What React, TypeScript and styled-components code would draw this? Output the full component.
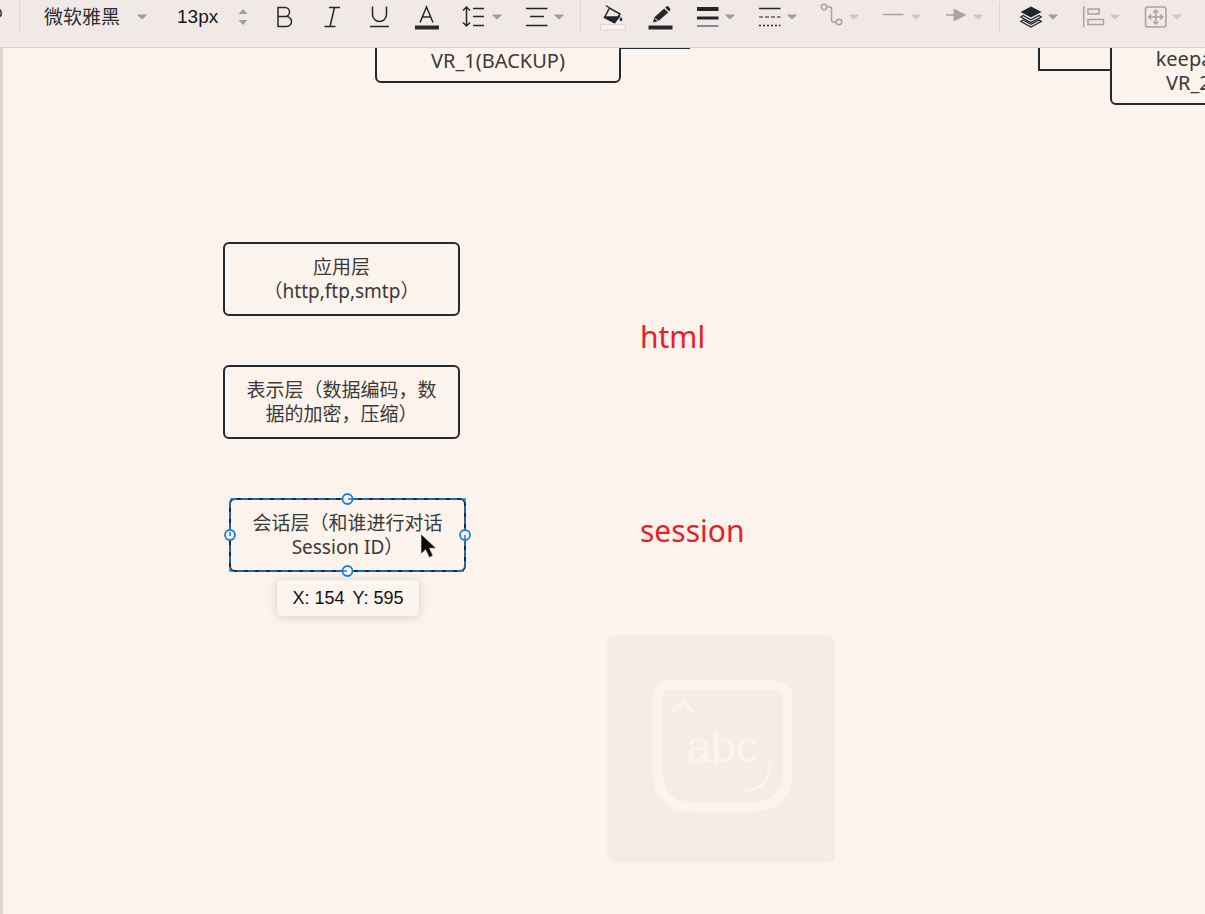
import React from 'react';
import styled, { createGlobalStyle } from 'styled-components';

const ink = '#22272e';
const faded = '#a8a3a1';
const line = '#242a31';
const blue = '#1b7fdc';

const GlobalStyle = createGlobalStyle`
  * { box-sizing: border-box; }
  body { margin: 0; background: #fbf3ec; }
  button, input, select { font: inherit; color: inherit; background: none; border: 0; margin: 0; padding: 0; }
`;

const Page = styled.div`
  display: flex;
  flex-direction: column;
  min-height: 100vh;
  overflow: hidden;
  font-family: "Noto Sans", "Noto Sans CJK SC", sans-serif;
  color: #3a3a3a;
`;

const Toolbar = styled.header`
  position: relative;
  z-index: 1;
  display: flex;
  align-items: flex-start;
  gap: 24px;
  height: 48px;
  padding-top: 2px;
  background: #f1e9e6;
  border-bottom: 1px solid #dad2d0;
  overflow: hidden;
`;

const Divider = styled.span<{ $first?: boolean }>`
  flex: none;
  width: 1px;
  height: 30px;
  margin: ${p => (p.$first ? '0 0 0 -8px' : '0 -4px 0 -8px')};
  background: #dbd4d2;
`;

const ToolButton = styled.button<{ $width?: number }>`
  flex: none;
  display: flex;
  align-items: center;
  justify-content: space-between;
  width: ${p => p.$width ?? 24}px;
  height: 30px;
`;

const FontPicker = styled.label`
  flex: none;
  display: flex;
  align-items: center;
  justify-content: space-between;
  width: 103px;
  height: 30px;
`;

const FontSelect = styled.select`
  appearance: none;
  width: 84px;
  height: 30px;
  font-size: 19px;
  line-height: 30px;
  color: #2b2f35;
  outline: 0;
`;

const SizeField = styled.div`
  flex: none;
  display: flex;
  align-items: center;
  justify-content: space-between;
  width: 77px;
  height: 30px;
  padding-left: 6px;
`;

const SizeInput = styled.input`
  width: 48px;
  height: 30px;
  font-family: "Liberation Sans", sans-serif;
  font-size: 19px;
  color: #16181b;
`;

const Stepper = styled.div`
  display: flex;
  flex-direction: column;
  gap: 6px;
`;

const StepButton = styled.button`
  display: flex;
  width: 10px;
  height: 5px;
`;

const Canvas = styled.main`
  position: relative;
  flex: 1;
  background: #fbf3ec;
  border-left: 3px solid #ddd5d3;
  overflow: hidden;
`;

const Edges = styled.svg`
  position: absolute;
  left: 0;
  top: 0;
  width: 100%;
  height: 100%;
`;

const Placed = styled.div<{ $x: number; $y: number }>`
  position: absolute;
  left: ${p => p.$x}px;
  top: ${p => p.$y}px;
`;

const Node = styled(Placed)<{ $wide?: boolean }>`
  display: flex;
  flex-direction: column;
  align-items: center;
  justify-content: flex-end;
  width: ${p => (p.$wide ? 246 : 237)}px;
  height: 74px;
  padding-bottom: ${p => (p.$wide ? 8 : 11)}px;
  border: 2px solid ${line};
  border-radius: 6px;
  font-size: ${p => (p.$wide ? 20 : 19)}px;
  line-height: 24px;
  white-space: nowrap;
`;

const Selection = styled.svg`
  position: absolute;
  left: -8px;
  top: -8px;
  width: 249px;
  height: 86px;
`;

const Note = styled(Placed)`
  font-size: 30px;
  line-height: 40px;
  color: #ed1c24;
`;

const Coordinates = styled(Placed)`
  display: flex;
  align-items: center;
  justify-content: center;
  gap: 8px;
  width: 142px;
  height: 36px;
  border-radius: 4px;
  background: #fcf4ee;
  box-shadow: 0 1px 8px rgba(90, 60, 50, 0.22);
  font-family: "Liberation Sans", sans-serif;
  font-size: 18px;
  color: #111;
`;

const Keyboard = styled(Placed)`
  display: flex;
  width: 228px;
  height: 228px;
  border-radius: 8px;
  background: #f4ece7;
`;

const Caret = ({ off }: { off?: boolean }) => (
  <svg width="10" height="6" viewBox="0 0 10 6" aria-hidden="true">
    <path d="M1 .5h8q1 .2.3 1L5.700 5q-.7.6-1.400 0L.7 1.500Q0 .7 1 .5z" fill={off ? '#cbc8c8' : '#9a9ea8'} />
  </svg>
);

const Glyph = ({ children, w = 24 }: { children: React.ReactNode; w?: number }) => (
  <svg width={w} height="30" viewBox={`0 0 ${w} 30`} fill="none" stroke={ink} strokeWidth="1.5" overflow="visible" aria-hidden="true">
    {children}
  </svg>
);

const DropTool = ({ label, off, children }: { label: string; off?: boolean; children: React.ReactNode }) => (
  <ToolButton $width={38} aria-label={label} disabled={off}>
    <Glyph w={22}>{children}</Glyph>
    <Caret off={off} />
  </ToolButton>
);

export default function App() {
  return (
    <Page>
      <GlobalStyle />
      <Toolbar>
        <ToolButton $width={3} aria-label="Format painter">
          <Glyph w={3}><path d="M-1 7.500C1.800 8 2 14 -1 15" /></Glyph>
        </ToolButton>
        <Divider $first />
        <FontPicker>
          <FontSelect aria-label="Font" defaultValue="yahei">
            <option value="yahei">微软雅黑</option>
          </FontSelect>
          <Caret />
        </FontPicker>
        <SizeField>
          <SizeInput aria-label="Font size" defaultValue="13px" />
          <Stepper>
            <StepButton aria-label="Increase"><svg width="10" height="5"><path d="M.5 5L5 0l4.500 5z" fill="#9a9ea8" /></svg></StepButton>
            <StepButton aria-label="Decrease"><svg width="10" height="5"><path d="M.5 0L5 5l4.500-5z" fill="#9a9ea8" /></svg></StepButton>
          </Stepper>
        </SizeField>
        <ToolButton aria-label="Bold">
          <Glyph><path d="M6 5.500h7a4.400 4.400 0 0 1 0 9H6zM6 14.500h8.500a4.900 4.900 0 0 1 0 10H6z" /></Glyph>
        </ToolButton>
        <ToolButton aria-label="Italic">
          <Glyph><path d="M9 5.500h11M4.500 24.500h11M14.500 5.500l-4.500 19" /></Glyph>
        </ToolButton>
        <ToolButton aria-label="Underline">
          <Glyph><path d="M4.500 4.500v8a7 7 0 0 0 14 0v-8M2 24.500h19" /></Glyph>
        </ToolButton>
        <ToolButton aria-label="Text color">
          <Glyph><path d="M4 20.500L10.500 5 17 20.500M6.500 15h8" /><path d="M-1 23.500h24v4h-24z" fill="#2c2b2a" stroke="none" /></Glyph>
        </ToolButton>
        <DropTool label="Line height">
          <path d="M2.500 5v19M-1 8.500L2.500 5 6 8.500M-1 20.500L2.500 24 6 20.500M9 6.500h11M9 14.500h11M9 23.500h11" />
        </DropTool>
        <DropTool label="Text alignment">
          <path d="M0 6.500h21.500M4 14.500h14M0 23.500h21.500" />
        </DropTool>
        <Divider />
        <ToolButton $width={24} aria-label="Fill color">
          <Glyph>
            <path d="M8.500 6L3.500 15.500l10 5 5.500-8.500zM5 3.500l4.500 3" />
            <path d="M3.500 15h14.500l-4.500 5.500z" fill={ink} />
            <path d="M20 15q2.800 3.600 0 4.200-2.600-.6 0-4.200z" fill={ink} stroke="none" />
            <path d="M-.5 22.500h25v5.500h-25z" fill="#faf3ed" stroke="#ddd5d1" strokeWidth="1" />
          </Glyph>
        </ToolButton>
        <ToolButton aria-label="Line color">
          <Glyph>
            <g fill={ink} stroke="none">
              <path d="M4 20.500l1.400-5.200L15.200 6.500l4 4L9.400 19z" />
              <path d="M16.200 5.600l1.200-1.100q1-.8 2 .1l1.600 1.700q.9 1 0 2l-1 1.200z" />
              <path d="M-.5 23.500h24v4h-24z" />
            </g>
            <path d="M5.500 16l3.600 3" stroke="#f1e9e6" strokeWidth="1" />
          </Glyph>
        </ToolButton>
        <DropTool label="Line width">
          <path d="M0 7h21.500" strokeWidth="4" /><path d="M0 16h21.500" strokeWidth="3" /><path d="M0 24h21.500" stroke="#666a6d" />
        </DropTool>
        <DropTool label="Line style">
          <path d="M0 6.500h21.500" /><path d="M0 15h21.500" strokeDasharray="4 2" stroke="#5d6266" /><path d="M0 23.500h21.500" strokeDasharray="2 2" />
        </DropTool>
        <DropTool label="Connector type" off>
          <g stroke={faded}><circle cx="3" cy="5" r="2.700" /><circle cx="18" cy="20" r="2.700" /><path d="M6 5h3q1.500 0 1.500 1.500v12q0 1.500 1.500 1.500h3" /></g>
        </DropTool>
        <DropTool label="Line start" off>
          <path d="M0 12.500h20.500" stroke={faded} />
        </DropTool>
        <DropTool label="Line end" off>
          <path d="M1 13h10" stroke={faded} /><path d="M8.500 6.500L21.500 13 8.500 19.500z" fill={faded} stroke="none" />
        </DropTool>
        <Divider />
        <DropTool label="Layers">
          <path d="M11 4.500L21.500 10 11 15.500.5 10z" fill={ink} stroke="none" />
          <path d="M.8 15L3 13.500l8 4.300 8-4.300 2.200 1.500L11 20.500zM.8 19.500L3 18l8 4.300 8-4.300 2.200 1.500L11 25z" strokeWidth="1.300" />
        </DropTool>
        <DropTool label="Align" off>
          <path d="M1.700 4v21M6 7h11v5H6zM6 17.500h15.500v5H6z" stroke={faded} />
        </DropTool>
        <DropTool label="Match size" off>
          <g stroke={faded}>
            <rect x="1.500" y="5" width="20.400" height="20" rx="2" />
            <path d="M11.700 8v14M4.700 15h14M9.200 10.500L11.700 8l2.500 2.500M9.200 19.500l2.500 2.500 2.500-2.500M7.200 12.500L4.700 15l2.500 2.500M16.200 12.500l2.500 2.500-2.500 2.500" />
          </g>
        </DropTool>
      </Toolbar>
      <Canvas>
        <Edges fill="none" stroke={line} strokeWidth="2" aria-hidden="true">
          <path d="M618 0h69M1036 0v22h72" />
        </Edges>
        <Node $wide $x={372} $y={-39}>
          <span>VR_1(BACKUP)</span>
        </Node>
        <Node $wide $x={1107} $y={-17}>
          <span>keepalived-main</span>
          <span>VR_2(BACKUP)</span>
        </Node>
        <Node $x={220} $y={194}>
          <span>应用层</span>
          <span>（http,ftp,smtp）</span>
        </Node>
        <Node $x={220} $y={317}>
          <span>表示层（数据编码，数</span>
          <span>据的加密，压缩）</span>
        </Node>
        <Node $x={226} $y={450}>
          <span>会话层（和谁进行对话</span>
          <span>Session ID）</span>
          <Selection fill="none" stroke={blue} aria-hidden="true">
            <path d="M7 7h235v72H7z" strokeWidth="1.500" strokeDasharray="7 4" />
            <g fill="#fcf3ed" strokeWidth="1.800">
              <circle cx="124.500" cy="7" r="5" />
              <circle cx="242" cy="43" r="5" />
              <circle cx="124.500" cy="79" r="5" />
              <circle cx="7" cy="43" r="5" />
            </g>
            <path d="M125 7h4M242 43v4M120 79h4M7 40v4" strokeWidth="1.500" />
          </Selection>
        </Node>
        <Coordinates $x={274} $y={532}>
          <span>X: 154</span>
          <span>Y: 595</span>
        </Coordinates>
        <Note $x={637} $y={269}>html</Note>
        <Note $x={637} $y={463}>session</Note>
        <Keyboard $x={604} $y={587}>
          <svg width="228" height="228" fill="none" stroke="#fcf3ed" aria-hidden="true">
            <path d="M62 50.500H168Q180.500 50.500 180.500 63V136Q180.500 172 144 172H87Q50.500 172 50.500 136V63Q50.500 50.500 62 50.500z" strokeWidth="10" />
            <path d="M65 78l11-11 11 11" strokeWidth="4" />
            <path d="M163 127q0 29-28 29" strokeWidth="3" />
            <text x="79" y="127" fontFamily="Liberation Sans, sans-serif" fontSize="45" fill="#fcf3ed" stroke="none">abc</text>
          </svg>
        </Keyboard>
        <Placed $x={417} $y={485}>
          <svg width="18" height="26" aria-hidden="true">
            <path d="M1 1v20l4.600-4.200 3.600 7.600 3.800-1.700-3.500-7.400H16z" fill="#0a0a0a" stroke="#f4ece7" strokeWidth=".6" />
          </svg>
        </Placed>
      </Canvas>
    </Page>
  );
}
